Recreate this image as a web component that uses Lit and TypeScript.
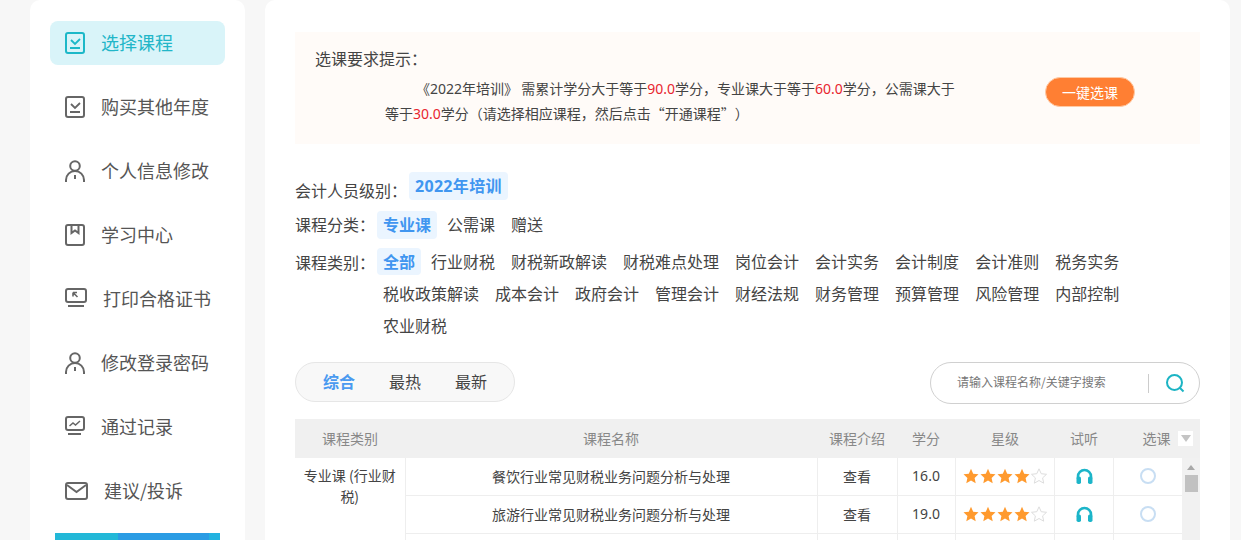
import { LitElement, html, css, svg } from "lit";
import { customElement } from "lit/decorators.js";

const I = (w: number, h: number, body: unknown, cls = "") => html`<svg class="ic ${cls}" width=${w} height=${h} viewBox="0 0 ${w} ${h}" fill="none" stroke="currentColor" stroke-width="2">${body}</svg>`;
const check = I(20, 22, svg`<rect x="1" y="1" width="18" height="20" rx="2"/><path d="M6 8l4 4 5-5" stroke-width="1.8"/><path d="M5 16h10" stroke-width="2"/>`);
const person = I(20, 22, svg`<circle cx="10" cy="6" r="4.8"/><path d="M1 22v-2a9 9 0 0 1 18 0v2"/><path d="M10 15v4"/>`);
const book = I(20, 22, svg`<rect x="1" y="1" width="18" height="20" rx="2"/><path d="M6.5 1v8l3.5-2.5L13.5 9V1"/>`);
const monitor = I(22, 20, svg`<rect x="1" y="1" width="20" height="13" rx="2"/><path d="M3 18h16"/><path d="M8 4.500h4M8 4.500v4M8 4.500l4.500 4.500" stroke-width="1.600"/>`, "up1");
const chart = I(20, 20, svg`<rect x="1" y="1" width="18" height="13" rx="2"/><path d="M3 18h13"/><path d="M4.500 10l3.500-3 2.500 2 4.500-4" stroke-width="1.500"/>`, "up1");
const mail = I(23, 18, svg`<rect x="1" y="1" width="21" height="16" rx="2"/><path d="M2 3l9.500 7L21 3"/>`);

const nav: [string, unknown][] = [
  ["选择课程", check], ["购买其他年度", check], ["个人信息修改", person], ["学习中心", book],
  ["打印合格证书", monitor], ["修改登录密码", person], ["通过记录", chart], ["建议/投诉", mail],
];
const cats = ["全部","行业财税","财税新政解读","财税难点处理","岗位会计","会计实务","会计制度","会计准则","税务实务","税收政策解读","成本会计","政府会计","管理会计","财经法规","财务管理","预算管理","风险管理","内部控制","农业财税"];
const rows = [["餐饮行业常见财税业务问题分析与处理","16.0"],["旅游行业常见财税业务问题分析与处理","19.0"],["","" ]];
const STAR = "M8 .8l2.200 4.900 5.300.6-3.900 3.600 1.100 5.300L8 12.500l-4.700 2.700 1.100-5.300L.5 6.300l5.300-.6z";
const stars = html`<span class="stars">${[0,1,2,3,4].map(i => html`<svg width="16" height="16" viewBox="0 0 16 16"><path d=${STAR} class=${i < 4 ? "on" : "off"}/></svg>`)}</span>`;
const phones = html`<svg width="17" height="16" viewBox="0 0 17 16" class="ph"><path d="M2 10V8.500a6.500 6.500 0 0 1 13 0V10" fill="none" stroke="currentColor" stroke-width="2.600"/><rect x=".5" y="8.500" width="4.500" height="7.500" rx="1.800" fill="currentColor"/><rect x="12" y="8.500" width="4.500" height="7.500" rx="1.800" fill="currentColor"/></svg>`;

@customElement("app-root")
export class AppRoot extends LitElement {
  static styles = css`
    :host { display: block; height: 540px; overflow: hidden; background: #f7f7f7;
      font-family: "Noto Sans CJK SC", "Liberation Sans", sans-serif; color: #444; text-spacing-trim: space-all; }
    .n { font-family: "Noto Sans", "Noto Sans CJK SC", sans-serif; }
    .page { display: flex; gap: 20px; padding: 0 11px 0 30px; height: 540px; overflow: hidden; }
    .side { width: 215px; flex: none; background: #fff; border-radius: 10px 10px 0 0; padding: 21px 20px 0; box-sizing: border-box; }
    .nav { display: flex; align-items: center; gap: 16px; height: 44px; padding-left: 15px; margin-bottom: 20px; border-radius: 8px; font-size: 18px; color: #555; }
    .nav span { margin-bottom: 2px; }
    .nav.on { background: #d9f4f9; color: #22b6c8; }
    .ic { flex: none; color: #666; display: block; }
    .ic.up1 { margin-bottom: 2px; }
    .nav.on .ic { color: #1cb8c8; }
    .bar { display: flex; height: 30px; margin: 0 -5px 0 5px; width: 165px; }
    .bar i { display: block; }
    .bar i:nth-child(1) { width: 63px; background: #22b8d8; }
    .bar i:nth-child(2) { width: 91px; background: #2a9ce4; }
    .bar i:nth-child(3) { width: 11px; background: #22b2e0; }

    .main { width: 965px; flex: none; background: #fff; border-radius: 10px 10px 0 0; padding: 32px 30px 0; box-sizing: border-box; }
    .notice { height: 112px; box-sizing: border-box; background: #fffbf8; padding: 16px 20px; }
    .ntitle { font-size: 16px; line-height: 20px; color: #444; }
    .nbody { display: flex; margin-top: 8px; }
    .npara { width: 575px; margin: 0 0 0 70px; flex: none; font-size: 14px; line-height: 24.5px; text-indent: 31px; color: #444; }
    .npara .n { line-height: 0; }
    .npara b { font-weight: 400; color: #e8252f; }
    .btn { margin: 1px 0 0 85px; width: 90px; height: 30px; box-sizing: border-box; border: 1px solid #ffc9a3; border-radius: 15px; background: #ff7f33; color: #fff; font: inherit; font-size: 14px; line-height: 26px; text-align: center; padding: 0; }

    .filters { margin-top: 28px; display: flex; flex-direction: column; font-size: 16px; }
    .frow { display: flex; align-items: flex-start; color: #444; }
    .flabel { line-height: 28px; flex: none; margin-right: 2px; }
    .fitems { display: flex; flex-wrap: wrap; row-gap: 5px; flex: 1; }
    .chip { padding: 0 6px; margin-right: 4px; line-height: 27px; height: 27px; border-radius: 4px; color: #444; white-space: nowrap; }
    .chip.on { background: #ebf5ff; color: #4096f0; font-weight: 700; }
    .r1 { margin-bottom: 7px; height: 32px; }
    .r2 { margin-bottom: 9px; }
    .r1 .chip, .r2 .chip { line-height: 26px; height: 28px; }
    .r1 .chip { letter-spacing: .3px; }
    .r1 .flabel { margin-top: 4px; }
    .r2 .flabel { line-height: 26px; }

    .tools { display: flex; justify-content: space-between; margin-top: 23px; height: 42px; }
    .tabs { display: flex; width: 220px; height: 40px; box-sizing: border-box; border: 1px solid #e6e6e6; background: #f8f8f8; border-radius: 20px; padding-left: 27px; gap: 34px; font-size: 16px; line-height: 36px; color: #444; }
    .tabs .on { color: #4a9af0; font-weight: 700; }
    .search { display: flex; align-items: center; width: 270px; height: 42px; box-sizing: border-box; border: 1px solid #d0d0d0; border-radius: 21px; padding-left: 26px; font-size: 12px; color: #777; }
    .search span { width: 191px; flex: none; white-space: nowrap; margin-bottom: 3px; }
    .search .sep { width: 1px; height: 19px; background: #ccc; flex: none; }
    .search svg { margin-left: 16px; color: #1cb4c4; flex: none; }

    .thead { position: relative; display: grid; grid-template-columns: 110px 412px 80px 58px 100px 58px 87px; height: 39px; margin-top: 15px; background: #f0f0f0; font-size: 14px; line-height: 39px; color: #888; text-align: center; }
    .drop { position: absolute; left: 883px; top: 12px; width: 15px; height: 15px; background: #fff; display: flex; align-items: center; justify-content: center; }
    .drop::after { content: ""; border: 5px solid transparent; border-top: 7px solid #c4c4c4; border-bottom: 0; }
    .tbody { display: flex; align-items: flex-start; }
    table { width: 887px; table-layout: fixed; border-collapse: collapse; font-size: 14px; color: #444; flex: none; }
    td { height: 35px; padding: 0 0 2px; border-bottom: 1px solid #eee; border-left: 1px solid #eee; text-align: center; vertical-align: middle; }
    td svg { display: block; margin: 0 auto; }
    td.cat { border-left: 0; vertical-align: top; padding: 7px 6px 0; line-height: 21px; border-bottom: 0; }
    td.listen { padding-left: 1px; }
    .stars { display: flex; justify-content: center; }
    .stars svg { margin: 0 .5px; }
    .on { fill: #ff9a2e; }
    .off { fill: #fff; stroke: #ddd; stroke-width: 1; }
    .ph { color: #1cb5c9; }
    .radio { width: 16px; height: 16px; box-sizing: border-box; border: 2px solid #c8def3; border-radius: 50%; margin: 0 auto; }
    .sb { width: 18px; flex: none; background: #f1f1f1; height: 120px; display: flex; flex-direction: column; align-items: center; }
    .up { margin-top: 7px; border: 4px solid transparent; border-bottom: 5px solid #a8a8a8; border-top: 0; }
    .thumb { margin-top: 5px; width: 13px; height: 17px; background: #c1c1c1; }
  `;

  render() {
    return html`<div class="page">
      <aside class="side">
        ${nav.map(([t, ic], i) => html`<div class="nav ${i === 0 ? "on" : ""}">${ic}<span>${t}</span></div>`)}
        <div class="bar"><i></i><i></i><i></i></div>
      </aside>
      <main class="main">
        <section class="notice">
          <div class="ntitle">选课要求提示：</div>
          <div class="nbody">
            <p class="npara">《<span class="n">2022</span>年培训》 需累计学分大于等于<b class="n">90.0</b>学分，专业课大于等于<b class="n">60.0</b>学分，公需课大于等于<b class="n">30.0</b>学分（请选择相应课程，然后点击“开通课程”）</p>
            <button class="btn">一键选课</button>
          </div>
        </section>
        <section class="filters">
          <div class="frow r1"><span class="flabel">会计人员级别：</span><div class="fitems"><span class="chip on"><span class="n">2022</span>年培训</span></div></div>
          <div class="frow r2"><span class="flabel">课程分类：</span><div class="fitems"><span class="chip on">专业课</span><span class="chip">公需课</span><span class="chip">赠送</span></div></div>
          <div class="frow r3"><span class="flabel">课程类别：</span><div class="fitems">${cats.map((c, i) => html`<span class="chip ${i === 0 ? "on" : ""}">${c}</span>`)}</div></div>
        </section>
        <div class="tools">
          <div class="tabs"><span class="on">综合</span><span>最热</span><span>最新</span></div>
          <div class="search"><span>请输入课程名称/关键字搜索</span><i class="sep"></i>
            <svg width="20" height="20" viewBox="0 0 20 20" fill="none" stroke="currentColor" stroke-width="2"><circle cx="9.500" cy="9.500" r="7.500"/><path d="M15 15l3.500 3.500"/></svg></div>
        </div>
        <div class="thead"><span>课程类别</span><span>课程名称</span><span>课程介绍</span><span>学分</span><span>星级</span><span>试听</span><span>选课</span><i class="drop"></i></div>
        <div class="tbody">
          <table>
            <colgroup><col style="width:110px"><col style="width:412px"><col style="width:80px"><col style="width:58px"><col style="width:99px"><col style="width:59px"><col style="width:69px"></colgroup>
            ${rows.map((r, i) => html`<tr>
              ${i === 0 ? html`<td class="cat" rowspan="3">专业课 (行业财税)</td>` : ""}
              <td>${r[0]}</td><td>${r[0] ? "查看" : ""}</td><td class="n">${r[1]}</td>
              <td>${r[0] ? stars : ""}</td><td class="listen">${r[0] ? phones : ""}</td><td>${r[0] ? html`<div class="radio"></div>` : ""}</td>
            </tr>`)}
          </table>
          <div class="sb"><i class="up"></i><i class="thumb"></i></div>
        </div>
      </main>
    </div>`;
  }
}
